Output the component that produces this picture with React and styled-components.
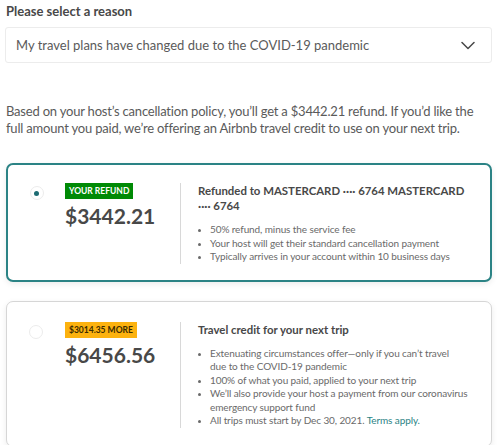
import React from 'react';
import styled, { createGlobalStyle } from 'styled-components';

const GlobalStyle = createGlobalStyle`
  html, body {
    margin: 0;
    padding: 0;
    background: #ffffff;
    font-family: "Lato", "Liberation Sans", sans-serif;
    color: #484848;
  }
  * { box-sizing: border-box; }
`;

const Page = styled.div`
  width: 500px;
  padding: 3px 8px 0 6px;
`;

const Label = styled.h2`
  margin: 0 0 8px 0;
  font-size: 13px;
  font-weight: 700;
  color: #484848;
  line-height: 16px;
`;

const SelectBox = styled.div`
  display: flex;
  align-items: center;
  justify-content: space-between;
  height: 36px;
  margin-left: -1px;
  padding: 0 16px 0 10px;
  border: 1px solid #ececec;
  border-radius: 3px;
  background: #fff;
  font-size: 13px;
  color: #5a5a5a;
`;

const Intro = styled.p`
  margin: 40px 0 0 0;
  font-size: 13px;
  letter-spacing: -0.2px;
  line-height: 17px;
  color: #5a5a5a;
`;

const Cards = styled.div`
  display: flex;
  flex-direction: column;
  gap: 19px;
  margin-top: 26px;
`;

const Card = styled.div`
  display: flex;
  align-items: stretch;
  padding: ${p => (p.$selected ? '18px 0 16px 0' : '20px 0 18px 0')};
  border: ${p => (p.$selected ? '2px solid #2b8385' : '1px solid #d6d6d6')};
  border-radius: 7px;
  background: #fff;
  box-shadow: 0 2px 6px rgba(0, 0, 0, 0.08);
`;

const RadioCol = styled.div`
  width: ${p => (p.$selected ? '57px' : '58px')};
  display: flex;
  justify-content: center;
  padding-top: 3px;
`;

const Radio = styled.div`
  width: 14px;
  height: 14px;
  border-radius: 50%;
  border: 1px solid #ececec;
  display: flex;
  align-items: center;
  justify-content: center;
  &::after {
    content: '';
    width: 5px;
    height: 5px;
    border-radius: 50%;
    background: ${p => (p.$selected ? '#1d6b72' : 'transparent')};
  }
`;

const AmountCol = styled.div`
  width: 115px;
  display: flex;
  flex-direction: column;
  align-items: flex-start;
`;

const Badge = styled.span`
  display: inline-block;
  padding: 3px 4px;
  font-size: 8.5px;
  font-weight: 700;
  line-height: 10px;
  background: ${p => p.$bg};
  color: ${p => p.$color};
`;

const Amount = styled.div`
  margin-top: 3px;
  font-size: 21px;
  font-weight: 700;
  color: #484848;
  line-height: 28px;
`;

const Divider = styled.div`
  width: 1px;
  background: #d8d8d8;
  margin-right: 17px;
`;

const Details = styled.div`
  flex: 1;
  padding-right: 12px;
`;

const Title = styled.h3`
  margin: 0 0 10px 0;
  font-size: 11.4px;
  font-weight: 700;
  line-height: 15px;
  color: #484848;
`;

const Bullets = styled.ul`
  margin: 0;
  padding: 0 0 0 12px;
  list-style: disc;
  font-size: 10px;
  letter-spacing: -0.1px;
  line-height: 13.5px;
  color: #6a6a6a;
  li::marker { font-size: 8px; }
`;

const Link = styled.a`
  color: #2b8385;
  text-decoration: none;
`;

function Chevron() {
  return (
    <svg width="14" height="9" viewBox="0 0 14 9" fill="none">
      <path d="M1 1.5l6 6 6-6" stroke="#484848" strokeWidth="1.5" strokeLinecap="round" strokeLinejoin="round" />
    </svg>
  );
}

export default function App() {
  return (
    <>
      <GlobalStyle />
      <Page>
        <Label>Please select a reason</Label>
        <SelectBox>
          <span>My travel plans have changed due to the COVID-19 pandemic</span>
          <Chevron />
        </SelectBox>
        <Intro>
          Based on your host’s cancellation policy, you’ll get a $3442.21 refund. If you’d like the
          full amount you paid, we’re offering an Airbnb travel credit to use on your next trip.
        </Intro>
        <Cards>
          <Card $selected>
            <RadioCol $selected>
              <Radio $selected />
            </RadioCol>
            <AmountCol>
              <Badge $bg="#008a05" $color="#ffffff">YOUR REFUND</Badge>
              <Amount>$3442.21</Amount>
            </AmountCol>
            <Divider />
            <Details>
              <Title>Refunded to MASTERCARD ···· 6764 MASTERCARD ···· 6764</Title>
              <Bullets>
                <li>50% refund, minus the service fee</li>
                <li>Your host will get their standard cancellation payment</li>
                <li>Typically arrives in your account within 10 business days</li>
              </Bullets>
            </Details>
          </Card>
          <Card>
            <RadioCol>
              <Radio />
            </RadioCol>
            <AmountCol>
              <Badge $bg="#fcb20f" $color="#3a2a00">$3014.35 MORE</Badge>
              <Amount>$6456.56</Amount>
            </AmountCol>
            <Divider />
            <Details>
              <Title>Travel credit for your next trip</Title>
              <Bullets>
                <li>Extenuating circumstances offer—only if you can’t travel due{'\u00A0'}to the COVID-19 pandemic</li>
                <li>100% of what you paid, applied to your next trip</li>
                <li>We’ll also provide your host a payment from our coronavirus emergency support fund</li>
                <li>
                  All trips must start by Dec 30, 2021. <Link href="#">Terms apply.</Link>
                </li>
              </Bullets>
            </Details>
          </Card>
        </Cards>
      </Page>
    </>
  );
}
